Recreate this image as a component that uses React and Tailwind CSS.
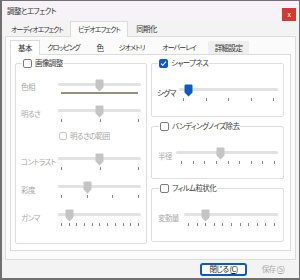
import React from 'react';

const Thumb = ({ on }) => (
  <svg width="9" height="13" viewBox="0 0 9 13" className="block">
    <path
      d="M1.5 0.5 H7.5 a1 1 0 0 1 1 1 V8.6 L4.5 12.5 L0.5 8.6 V1.5 a1 1 0 0 1 1 -1 Z"
      fill={on ? '#0b5cc1' : '#c4c4c4'}
    />
  </svg>
);

// width: track width, thumb: thumb centre, from/to: first and last tick
const Slider = ({ width, thumb, from, to, ticks, on, bar }) => {
  const marks = Array.from({ length: ticks }, (_, i) => i);
  return (
    <div className="flex flex-col shrink-0" style={{ width }}>
      <div className="relative h-[13px]">
        <div className="absolute left-0 right-0 top-[4px] h-[3px] rounded-full bg-[#e2e2e2]" />
        <div className="absolute top-0" style={{ left: thumb - 4 }}>
          <Thumb on={on} />
        </div>
      </div>
      {bar ? (
        <div className="mx-[3px] h-[2px] bg-[#94917b]" />
      ) : (
        <div className="mt-[1px] h-[3px] flex justify-between" style={{ marginLeft: from, width: to - from + 1 }}>
          {marks.map((i) => (
            <div key={i} className="w-[1px] h-[3px] bg-[#8a8a8a]" />
          ))}
        </div>
      )}
    </div>
  );
};

const Check = ({ checked }) =>
  checked ? (
    <div className="w-[9px] h-[9px] rounded-[2px] bg-[#0b5cc1] flex items-center justify-center shrink-0">
      <svg width="7" height="7" viewBox="0 0 7 7">
        <path d="M1 3.6 L2.8 5.3 L6 1.6" fill="none" stroke="white" strokeWidth="1.1" />
      </svg>
    </div>
  ) : (
    <div className="w-[9px] h-[9px] rounded-[2px] border border-[#7c7c7c] bg-white shrink-0" />
  );

const Group = ({ title, checked, className, children }) => (
  <fieldset className={`border border-[#dedede] rounded-[2px] ${className}`}>
    <legend className="ml-[1px] px-[1px] h-[10px] flex items-center gap-[3px] text-[#3a3a3a]">
      <Check checked={checked} />
      <span className="leading-[10px]">{title}</span>
    </legend>
    {children}
  </fieldset>
);

const Row = ({ label, dark, pad, className, children }) => (
  <div className={`flex items-center ${className}`}>
    <span className={`shrink-0 ${dark ? 'text-[#333]' : 'text-[#a8a8a8]'}`} style={{ width: pad }}>
      {label}
    </span>
    {children}
  </div>
);

export default function App() {
  return (
    <div className="w-[300px] h-[280px] flex flex-col bg-[#f3f3f3] border border-[#707070] border-l-2 border-b-2 text-[7.5px] leading-none tracking-[-0.6px] text-[#222] font-['Noto_Sans_CJK_JP','Noto_Sans',sans-serif] [font-feature-settings:'palt'] overflow-hidden">
      {/* title bar */}
      <div className="h-[20px] shrink-0 flex items-start justify-between bg-[#f6f2f7] pl-[5px] pr-[3px]">
        <span className="mt-[6px] text-[#333]">調整とエフェクト</span>
        <div className="mt-[7px] w-[14px] h-[13px] bg-[#cf3a33] text-white text-[7px] flex items-center justify-center">x</div>
      </div>

      {/* outer tabs */}
      <div className="h-[15px] shrink-0 flex items-end px-[2px] text-[#333] text-[7px] tracking-[-0.9px]">
        <div className="h-[14px] w-[66px] flex items-center justify-center">オーディオエフェクト</div>
        <div className="h-[16px] w-[58px] -mb-px flex items-center justify-center bg-[#fbfbfb] border border-b-0 border-[#dcdcdc] z-10">ビデオエフェクト</div>
        <div className="h-[14px] w-[37px] flex items-center justify-center text-[7.5px] tracking-[-0.6px]">同期化</div>
      </div>

      {/* outer panel */}
      <div className="mx-[3px] h-[224px] shrink-0 flex flex-col bg-[#fbfbfb] border border-[#dcdcdc] px-[4px]">
        {/* inner tabs */}
        <div className="h-[17px] shrink-0 flex items-end text-[#333]">
          <div className="h-[15px] -mb-px w-[30px] flex items-center justify-center bg-white border border-b-0 border-[#dcdcdc] z-10">基本</div>
          <div className="h-[13px] w-[47px] flex items-center justify-center text-[7px] tracking-[-0.9px]">クロッピング</div>
          <div className="h-[13px] w-[26px] flex items-center justify-center">色</div>
          <div className="h-[13px] w-[37px] flex items-center justify-center text-[7px] tracking-[-0.9px]">ジオメトリ</div>
          <div className="h-[13px] w-[58px] flex items-center justify-center text-[7px] tracking-[-0.9px]">オーバーレイ</div>
          <div className="h-[13px] w-[41px] flex items-center justify-center bg-[#efefef]">詳細設定</div>
        </div>

        {/* inner panel */}
        <div className="h-[197px] shrink-0 flex gap-[4px] bg-white border border-[#dcdcdc] pl-[4px] pr-[6px] pt-[3px]">
          {/* left group */}
          <Group title="画像調整" className="w-[133px] h-[186px] pl-[5px]">
            <Row label="色相" pad={37} className="mt-[11px]">
              <Slider width={83} thumb={41} from={3} to={80} ticks={3} bar />
            </Row>
            <Row label="明るさ" pad={37} className="mt-[11px]">
              <Slider width={83} thumb={41} from={3} to={80} ticks={3} />
            </Row>
            <div className="mt-[10px] ml-[38px] flex items-center gap-[3px] text-[#a8a8a8]">
              <div className="w-[8px] h-[8px] rounded-[2px] border border-[#c8c8c8] bg-white" />
              <span>明るさの範囲</span>
            </div>
            <Row label="コントラスト" pad={37} className="mt-[13px]">
              <Slider width={83} thumb={41} from={3} to={80} ticks={3} />
            </Row>
            <Row label="彩度" pad={37} className="mt-[11px]">
              <Slider width={83} thumb={29} from={3} to={80} ticks={4} />
            </Row>
            <Row label="ガンマ" pad={37} className="mt-[11px]">
              <Slider width={83} thumb={11} from={3} to={80} ticks={11} />
            </Row>
          </Group>

          {/* right column */}
          <div className="w-[134px] flex flex-col">
            <Group title="シャープネス" checked className="h-[59px] pl-[5px]">
              <Row label="シグマ" dark pad={22} className="mt-[16px]">
                <Slider width={99} thumb={9} from={4} to={94} ticks={5} on />
              </Row>
            </Group>
            <Group title="バンディングノイズ除去" className="mt-[4px] h-[58px] pl-[6px]">
              <Row label="半径" pad={18} className="mt-[16px]">
                <Slider width={102} thumb={44} from={5} to={98} ticks={9} />
              </Row>
            </Group>
            <Group title="フィルム粒状化" className="mt-[4px] h-[59px] pl-[6px]">
              <Row label="変動量" pad={26} className="mt-[16px]">
                <Slider width={94} thumb={21} from={4} to={90} ticks={11} />
              </Row>
            </Group>
          </div>
        </div>
      </div>

      {/* footer */}
      <div className="flex-1 flex items-center justify-end gap-[7px] pr-[7px]">
        <div className="w-[47px] h-[13px] flex items-center justify-center bg-white border-2 border-[#0b5cc1] rounded-[3px] text-[#222]">
          閉じる (<span className="underline">C</span>)
        </div>
        <div className="w-[38px] h-[13px] flex items-center justify-center text-[#a8a8a8]">
          保存 (<span className="underline">S</span>)
        </div>
      </div>
    </div>
  );
}
